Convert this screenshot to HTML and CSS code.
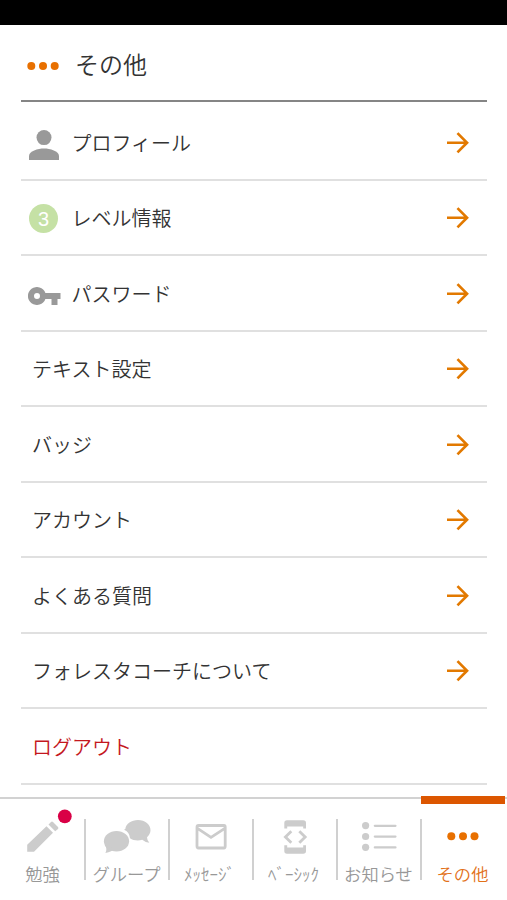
FILE: index.html
```html
<!DOCTYPE html>
<html lang="ja">
<head>
<meta charset="utf-8">
<title>その他</title>
<link rel="stylesheet" href="styles.css">
</head>
<body>
<svg class="defs" aria-hidden="true">
  <symbol id="arrow" viewBox="0 0 24 24"><path d="M1 12H21M11.7 2.2L21.5 12L11.7 21.8"/></symbol>
</svg>
<div class="statusbar"></div>
<main class="page">
  <header class="header">
    <svg class="dots" viewBox="0 0 32 10"><circle cx="4.3" cy="5" r="4"/><circle cx="16" cy="5" r="4"/><circle cx="27.7" cy="5" r="4"/></svg>
    <h1>その他</h1>
  </header>
  <ul class="menu">
    <li class="row with-icon"><span class="icon"><svg class="person" width="30" height="30" viewBox="0 0 30 30"><circle cx="15" cy="7.6" r="7.5"/><path d="M0 30V26C0 21 9 18.5 15 18.5S30 21 30 26V30Z"/></svg></span><span class="label">プロフィール</span><svg class="arrow"><use href="#arrow"/></svg></li>
    <li class="row with-icon"><span class="icon"><span class="level">3</span></span><span class="label">レベル情報</span><svg class="arrow"><use href="#arrow"/></svg></li>
    <li class="row with-icon"><span class="icon"><svg class="key" width="33" height="18" viewBox="0 0 33 18"><path fill-rule="evenodd" d="M17.4 6A9 9 0 1 0 17.4 12H23.5V18H29.5V12H32.5V6ZM9 6A3 3 0 1 1 9 12A3 3 0 0 1 9 6Z"/></svg></span><span class="label">パスワード</span><svg class="arrow"><use href="#arrow"/></svg></li>
    <li class="row"><span class="label">テキスト設定</span><svg class="arrow"><use href="#arrow"/></svg></li>
    <li class="row"><span class="label">バッジ</span><svg class="arrow"><use href="#arrow"/></svg></li>
    <li class="row"><span class="label">アカウント</span><svg class="arrow"><use href="#arrow"/></svg></li>
    <li class="row"><span class="label">よくある質問</span><svg class="arrow"><use href="#arrow"/></svg></li>
    <li class="row"><span class="label">フォレスタコーチについて</span><svg class="arrow"><use href="#arrow"/></svg></li>
    <li class="row logout"><span class="label">ログアウト</span></li>
  </ul>
</main>
<nav class="tabs">
  <a class="tab">
    <svg viewBox="1 808 84 52"><path d="M27.2 851.8V844.8L46.5 826.3L53 832.8L34 851.8ZM48.5 824.5L51 822Q52 821 53 822L58 827Q58.8 828 58 829L55.2 831.2Z"/><circle class="badge" cx="64.8" cy="816.3" r="6.9"/></svg>
    <span>勉強</span>
  </a>
  <a class="tab">
    <svg viewBox="85 808 84 52"><ellipse cx="116.5" cy="841.2" rx="12.6" ry="10.2"/><path d="M105 845Q107.5 849 105.4 853Q112 852 115 848Z"/><path d="M125.3 829C126 823.5 131.5 820 138 820C145 820 150.5 824.5 150.5 830.3C150.5 833 149 835.5 147 837.2Q147 840 149.3 842.8Q145 842.3 142.2 839.8C138 841 133 840.4 130 838.2Q129.5 832 124 829.8Z"/></svg>
    <span>グループ</span>
  </a>
  <a class="tab narrow">
    <svg viewBox="169 808 84 52"><path class="line" d="M198.5 825.5H224Q225.2 825.5 225.2 827V846.3Q225.2 848 224 848H198.5Q197 848 197 846.3V827Q197 825.5 198.5 825.5ZM197.5 828.3L211 837.3L224.8 828.3"/></svg>
    <span>ﾒｯｾｰｼﾞ</span>
  </a>
  <a class="tab narrow">
    <svg viewBox="253 808 84 52"><path d="M284.3 828.5V823Q284.3 820.3 287 820.3H303.3Q306 820.3 306 823V828.5H303.2V826.5H287.2V828.5ZM284.3 845.2V851Q284.3 853.7 287 853.7H303.3Q306 853.7 306 851V845.2H303.2V847.5H287.2V845.2Z"/><path class="line" d="M291.3 831.2L285.4 837L291.3 842.8M299.3 831.2L305.2 837L299.3 842.8"/></svg>
    <span>ﾍﾞｰｼｯｸ</span>
  </a>
  <a class="tab">
    <svg viewBox="337 808 84 52"><circle cx="365.6" cy="825.6" r="3.6"/><circle cx="365.6" cy="836.5" r="3.6"/><circle cx="365.6" cy="847.3" r="3.6"/><path class="line thin" d="M374.8 825.8H395.5M374.8 836.6H395.5M374.8 847.4H395.5"/></svg>
    <span>お知らせ</span>
  </a>
  <a class="tab active">
    <svg viewBox="421 808 84 52"><circle cx="451.3" cy="836.2" r="4"/><circle cx="463" cy="836.2" r="4"/><circle cx="474.5" cy="836.2" r="4"/></svg>
    <span>その他</span>
  </a>
</nav>
</body>
</html>
```

FILE: styles.css
```css
* { box-sizing: border-box; }

body {
  margin: 0;
  height: 900px;
  overflow: hidden;
  display: flex;
  flex-direction: column;
  background: #fff;
  color: #333;
  font-family: "Noto Sans CJK JP", sans-serif;
  font-weight: 350;
}

.defs { display: none; }

.statusbar { height: 25px; flex: none; background: #000; }

.page { flex: 1; min-height: 0; overflow: hidden; padding: 0 20px 0 21px; }

.header {
  height: 76.7px;
  display: flex;
  align-items: center;
  gap: 16px;
  padding: 6px 0 0 6px;
  border-bottom: 2px solid #858585;
}

.header h1 { margin: -2px 0 0; font-size: 24px; font-weight: 350; line-height: 36px; }

.dots { width: 32px; height: 10px; margin-top: 2px; fill: #e87000; }

.menu { list-style: none; margin: 0; padding: 3.6px 0 0; }

.row {
  height: 75.5px;
  display: flex;
  align-items: center;
  padding: 1.4px 18px 0 11px;
  border-bottom: 2px solid #e0e0e0;
}

.label { flex: 1; font-size: 20px; line-height: 30px; }

.with-icon { padding-left: 5.5px; }

.icon { width: 45px; display: flex; align-items: center; padding-left: 1.5px; }

.icon svg { flex: none; fill: #999; }
.icon .person { margin: 4px 0 0 1px; }
.icon .key { margin-top: 5px; }

.level {
  width: 29px;
  height: 29px;
  margin-left: 1px;
  border-radius: 50%;
  background: #c5e1a5;
  color: #fff;
  font: 20px/30px "Liberation Sans", sans-serif;
  text-align: center;
}

.arrow {
  width: 23.5px;
  height: 23.5px;
  fill: none;
  stroke: #e27900;
  stroke-width: 2.7;
}

.logout { color: #c4171e; }

.tabs {
  height: 103px;
  flex: none;
  display: grid;
  grid-template-columns: repeat(6, 84px);
  padding-left: 1px;
  border-top: 2px solid #d2d2d2;
  color: #989898;
}

.tab {
  position: relative;
  height: 101px;
  padding-top: 9px;
  display: flex;
  flex-direction: column;
  align-items: center;
}

.tab:not(:last-child)::after {
  content: "";
  position: absolute;
  right: -1px;
  top: 20px;
  width: 2px;
  height: 61px;
  background: #d0d0d0;
}

.tab svg { width: 84px; height: 52px; flex: none; fill: #ccc; }
.tab .badge { fill: #d90046; }
.tab .line { fill: none; stroke: #ccc; stroke-width: 2.8; }
.tab .thin { stroke-width: 2.2; stroke-linecap: round; }

.tab span { margin-left: -1px; font-size: 17.3px; line-height: 28px; white-space: nowrap; }
.narrow span { margin-left: -3px; font-size: 17px; }

.tab.active { color: #e27119; }
.tab.active svg { fill: #e87000; }
.active::before {
  content: "";
  position: absolute;
  left: 0;
  top: -3px;
  width: 84px;
  height: 8px;
  background: #dc5600;
}
```
